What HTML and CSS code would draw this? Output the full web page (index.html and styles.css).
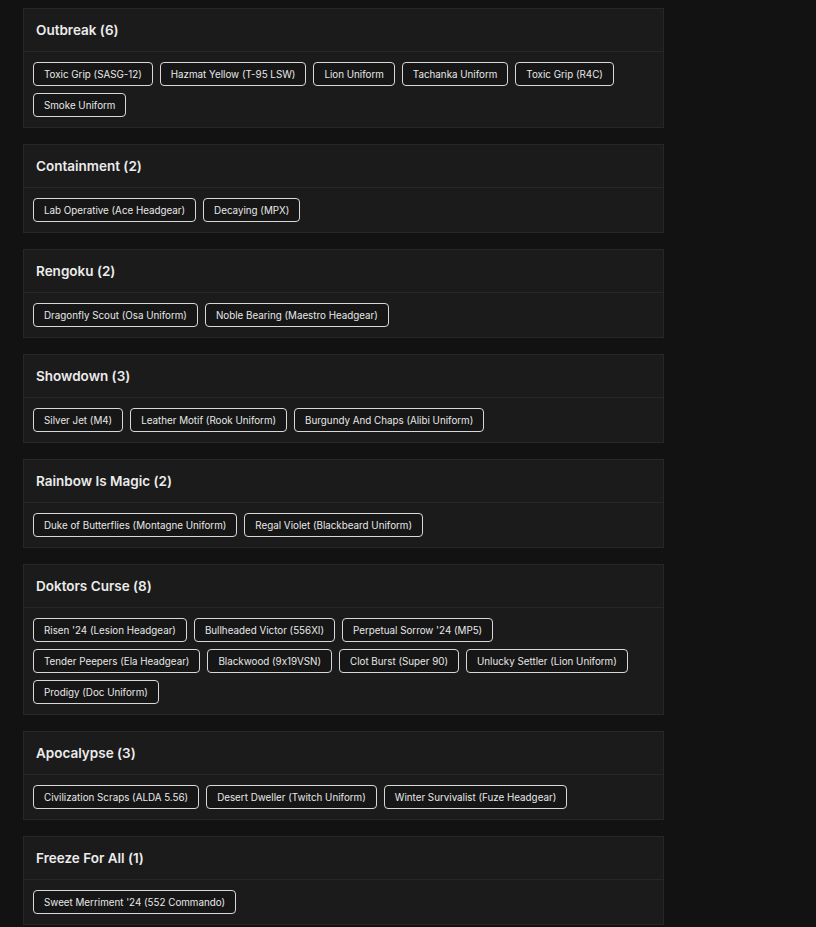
FILE: index.html
```html
<!DOCTYPE html>
<html lang="en">
<head>
  <meta charset="UTF-8">
  <title>Event Collections</title>
  <link rel="stylesheet" href="styles.css">
</head>
<body>
  <div class="collections">
    <div class="event">
      <div class="event-title">Outbreak (6)</div>
      <div class="items">
        <span class="item">Toxic Grip (SASG-12)</span>
        <span class="item">Hazmat Yellow (T-95 LSW)</span>
        <span class="item">Lion Uniform</span>
        <span class="item">Tachanka Uniform</span>
        <span class="item">Toxic Grip (R4C)</span>
        <span class="item">Smoke Uniform</span>
      </div>
    </div>

    <div class="event">
      <div class="event-title">Containment (2)</div>
      <div class="items">
        <span class="item">Lab Operative (Ace Headgear)</span>
        <span class="item">Decaying (MPX)</span>
      </div>
    </div>

    <div class="event">
      <div class="event-title">Rengoku (2)</div>
      <div class="items">
        <span class="item">Dragonfly Scout (Osa Uniform)</span>
        <span class="item">Noble Bearing (Maestro Headgear)</span>
      </div>
    </div>

    <div class="event">
      <div class="event-title">Showdown (3)</div>
      <div class="items">
        <span class="item">Silver Jet (M4)</span>
        <span class="item">Leather Motif (Rook Uniform)</span>
        <span class="item">Burgundy And Chaps (Alibi Uniform)</span>
      </div>
    </div>

    <div class="event">
      <div class="event-title">Rainbow Is Magic (2)</div>
      <div class="items">
        <span class="item">Duke of Butterflies (Montagne Uniform)</span>
        <span class="item">Regal Violet (Blackbeard Uniform)</span>
      </div>
    </div>

    <div class="event">
      <div class="event-title">Doktors Curse (8)</div>
      <div class="items">
        <span class="item">Risen '24 (Lesion Headgear)</span>
        <span class="item">Bullheaded Victor (556XI)</span>
        <span class="item">Perpetual Sorrow '24 (MP5)</span>
        <span class="item">Tender Peepers (Ela Headgear)</span>
        <span class="item">Blackwood (9x19VSN)</span>
        <span class="item">Clot Burst (Super 90)</span>
        <span class="item">Unlucky Settler (Lion Uniform)</span>
        <span class="item">Prodigy (Doc Uniform)</span>
      </div>
    </div>

    <div class="event">
      <div class="event-title">Apocalypse (3)</div>
      <div class="items">
        <span class="item">Civilization Scraps (ALDA 5.56)</span>
        <span class="item">Desert Dweller (Twitch Uniform)</span>
        <span class="item">Winter Survivalist (Fuze Headgear)</span>
      </div>
    </div>

    <div class="event">
      <div class="event-title">Freeze For All (1)</div>
      <div class="items">
        <span class="item">Sweet Merriment '24 (552 Commando)</span>
      </div>
    </div>
  </div>
</body>
</html>
```

FILE: styles.css
```css
* {
  box-sizing: border-box;
  font-family: 'Inter', 'Open Sans', sans-serif;
  font-feature-settings: "calt" 0;
}

body {
  margin: 0;
  background-color: #121212;
  color: #f1f1f1;
}

.collections {
  width: 641px;
  margin-left: 23px;
  padding-top: 8px;
  display: flex;
  flex-direction: column;
  gap: 16px;
}

.event {
  background-color: #1b1b1b;
  border: 1px solid #272727;
}

.event-title {
  height: 43px;
  display: flex;
  align-items: center;
  padding: 0 12px;
  font-size: 13.5px;
  font-weight: 600;
  color: #ececec;
  border-bottom: 1px solid #272727;
}

.items {
  display: flex;
  flex-wrap: wrap;
  gap: 7px;
  padding: 10px 9px;
}

.item {
  display: inline-flex;
  align-items: center;
  height: 24px;
  padding: 0 10px;
  font-size: 9.8px;
  color: #e8e8e8;
  background-color: #161616;
  border: 1px solid #d8d8d8;
  border-radius: 4px;
}
```
